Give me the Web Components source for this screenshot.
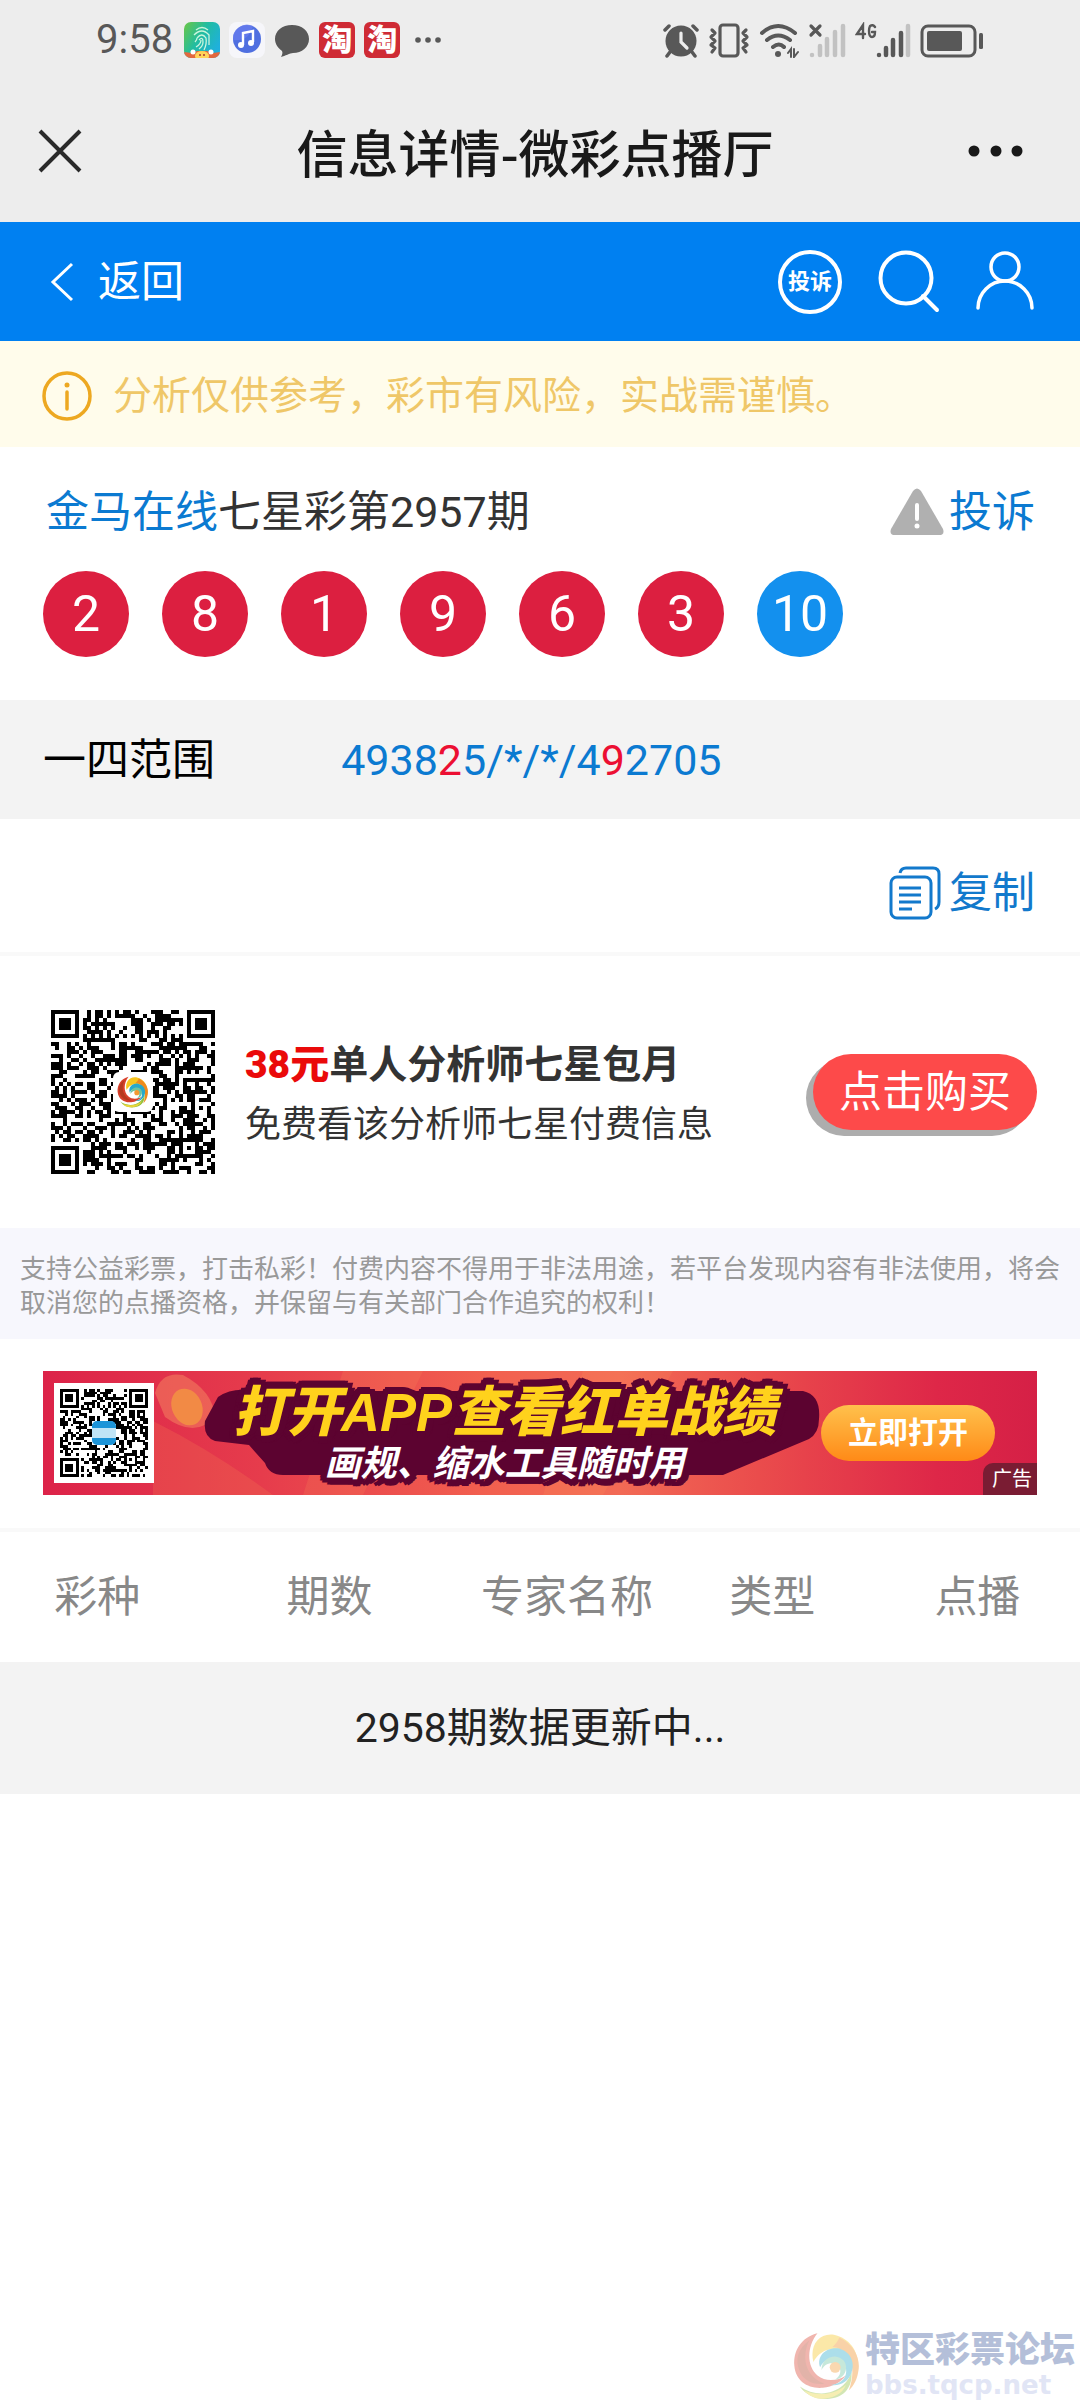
<!DOCTYPE html>
<html lang="zh-CN">
<head>
<meta charset="utf-8">
<meta name="viewport" content="width=device-width, initial-scale=1">
<title>信息详情-微彩点播厅</title>
<style>
  body { margin: 0; background: #fff; color: #333; font-family: Roboto, "Noto Sans CJK SC", sans-serif; font-size: 43px; line-height: 56px; }
</style>
</head>
<body>
<detail-page></detail-page>

<script>
const define = (name, html, setup) => {
  const tpl = document.createElement('template');
  tpl.innerHTML = `<style>
    * { box-sizing: border-box; }
    a { color: inherit; text-decoration: none; }
    button { border: 0; padding: 0; margin: 0; background: none; color: inherit; font: inherit; cursor: pointer; }
    svg { display: block; flex: none; }
  </style>` + html;
  customElements.define(name, class extends HTMLElement {
    constructor() {
      super();
      this.attachShadow({ mode: 'open' }).append(tpl.content.cloneNode(true));
    }
    connectedCallback() { if (setup) setup(this); }
  });
};

/* Rainbow swirl emblem */
define('swirl-logo', `
<style>:host { display: block; width: 68px; height: 68px; } svg { width: 100%; height: 100%; }</style>
<svg viewBox="0 0 100 100" aria-hidden="true">
  <path fill="#d8402c" d="M36 2C12 8 0 28 2 50c2 22 20 34 42 32 14-1 26-8 34-18-12 8-30 10-42 0C20 50 20 22 36 2z"/>
  <path fill="#b53a20" d="M24 12C8 24 2 40 10 58c6 14 20 20 36 18C28 70 18 54 18 38c0-10 2-18 6-26z"/>
  <path fill="#f7c51e" d="M30 44C24 20 38 1 60 4c28 6 40 32 34 56-4-20-16-36-34-35-14 0-24 8-30 19z"/>
  <path fill="#f08a1d" d="M68 8c22 10 32 32 28 50-2 12-6 20-14 28 6-16 8-34 0-48-6-10-14-16-24-16 4-4 8-8 10-14z"/>
  <path fill="#8ebf3c" d="M10 80c20 14 46 14 64-2 6-6 10-12 12-20 2 22-10 38-32 40-18 2-34-4-44-18z"/>
  <path fill="#e9d53a" d="M16 86c20 8 44 8 62-8-6 14-20 20-36 20-10 0-18-4-26-12z"/>
  <path fill="#28a9c9" d="M40 52c-6-16 8-30 26-28 18 4 26 20 20 36-4 12-16 20-30 18 16-2 24-12 22-24-2-10-12-16-22-14-8 1-14 6-16 12z"/>
  <path fill="#6cc3a0" d="M42 56c0-12 8-20 20-20 10 1 17 8 16 18-1 9-8 15-16 16 6-4 9-10 7-16-2-5-6-8-12-8-7 0-12 4-15 10z"/>
  <circle cx="62" cy="52" r="8" fill="#f39a32"/>
</svg>`);

/* QR symbol: finders, alignment and timing patterns plus a seeded data field */
define('qr-code', `
<style>
  :host { display: grid; place-items: center; background: #fff; flex: none; }
  svg, .mid { grid-area: 1 / 1; }
  svg { width: 100%; height: 100%; }
  .mid { background: #fff; border-radius: 6px; }
</style>
<svg role="img" aria-label="二维码" shape-rendering="crispEdges"></svg><div class="mid"><slot></slot></div>`, el => {
  const n = +el.getAttribute('modules');
  let seed = +el.getAttribute('seed');
  const rnd = () => (seed = (seed * 16807) % 2147483647) / 2147483647;
  const ring = (x, y, cx, cy) => Math.max(Math.abs(x - cx), Math.abs(y - cy));
  let d = '';
  for (let y = 0; y < n; y++) for (let x = 0; x < n; x++) {
    let on = rnd() < 0.52;
    for (const [cx, cy] of [[3, 3], [n - 4, 3], [3, n - 4]]) {
      const r = ring(x, y, cx, cy);
      if (r <= 4) on = r !== 4 && r !== 2;
    }
    const a = ring(x, y, n - 7, n - 7);
    if (a <= 2) on = a !== 1;
    if ((y === 6 && x > 7 && x < n - 8) || (x === 6 && y > 7 && y < n - 8)) on = (x + y) % 2 === 0;
    if (on) d += `M${x} ${y}h1v1h-1z`;
  }
  const svg = el.shadowRoot.querySelector('svg');
  svg.setAttribute('viewBox', `0 0 ${n} ${n}`);
  svg.innerHTML = `<path d="${d}"/>`;
});

define('status-bar', `
<style>
  :host { display: flex; justify-content: space-between; align-items: center; height: 80px; padding: 0 96px; background: #ededed; color: #585858; }
  div { display: flex; align-items: center; }
  .l { gap: 9px; } .r { gap: 9px; }
  .time { font-size: 40px; line-height: 48px; margin-right: 2px; }
  .tao { width: 36px; height: 36px; border-radius: 6px; background: #cf2b35; color: #fff; font-size: 30px; line-height: 36px; font-weight: 900; justify-content: center; }
</style>
<div class="l">
  <span class="time">9:58</span>
  <svg width="36" height="36" viewBox="0 0 36 36"><defs><linearGradient id="g" x2="1" y2=".6"><stop stop-color="#6cc644"/><stop offset=".5" stop-color="#22bda0"/><stop offset="1" stop-color="#1fb0dd"/></linearGradient><clipPath id="c"><rect width="36" height="36" rx="7"/></clipPath></defs><g clip-path="url(#c)"><rect width="36" height="36" fill="url(#g)"/><path d="M0 30l8 1 5-2h10l6 2 7-1v6H0z" fill="#e2683f"/><g fill="none" stroke="#c9f5dc" stroke-width="1.3"><path d="M12 8q6-5 12 0M10 13q8-8 15 0v10M13 16q5-6 9 0 1 6-2 12M15 18q4-4 4 2 0 4-4 7M11 20q2-2 2-4M12 25q5-3 5-7"/></g><ellipse cx="18" cy="34" rx="7" ry="5" fill="#ffd45a"/><circle cx="9" cy="30" r="2.500" fill="#fff"/><circle cx="27" cy="30" r="2.500" fill="#fff"/><circle cx="16" cy="33" r="1" fill="#a33"/><circle cx="20" cy="33" r="1" fill="#a33"/></g></svg>
  <svg width="36" height="36" viewBox="0 0 36 36"><rect width="36" height="36" rx="8" fill="#f6f6fa"/><circle cx="18" cy="17" r="14" fill="#4f6fe0"/><path d="M4 18a14 14 0 0 1 20-14q-4 16-20 14z" fill="#6a7cf0" opacity=".7"/><path d="M14 23V11l10-2v11" fill="none" stroke="#fff" stroke-width="2.400"/><circle cx="12" cy="23" r="3" fill="#fff"/><circle cx="22" cy="21" r="3" fill="#fff"/></svg>
  <svg width="36" height="36" viewBox="0 0 36 36"><path fill="#585858" d="M18 3c10 0 17 6 17 14s-7 14-16 14c-3 0-8 3-12 4 1-2 2-4 1-6-4-3-7-7-7-12C1 9 8 3 18 3z"/></svg>
  <div class="tao">淘</div><div class="tao">淘</div>
  <svg width="36" height="36" viewBox="0 0 36 36" fill="#585858"><circle cx="9" cy="18" r="2.800"/><circle cx="19" cy="18" r="2.800"/><circle cx="29" cy="18" r="2.800"/></svg>
</div>
<div class="r">
  <svg width="36" height="36" viewBox="0 0 36 36"><g stroke="#585858" stroke-width="3.500" stroke-linecap="round"><path d="M2 8l4-4M34 8l-4-4M7 30l-3 4M29 30l3 4"/></g><circle cx="18" cy="19" r="15.500" fill="#585858"/><path d="M18 11v9l6 6" fill="none" stroke="#ededed" stroke-width="3.200" stroke-linecap="round"/></svg>
  <svg width="42" height="36" viewBox="0 0 42 36" fill="none" stroke="#585858" stroke-width="3.200" stroke-linejoin="round" stroke-linecap="round"><rect x="12" y="3" width="18" height="31" rx="3"/><path d="M4 8l3 3-4 4 4 4-4 4 4 3-3 4M38 8l-3 3 4 4-4 4 4 4-4 3 3 4"/></svg>
  <svg width="40" height="36" viewBox="0 0 40 36" fill="none" stroke="#585858" stroke-width="4" stroke-linecap="round"><path d="M3 11q16-14 33 0M8 18q11-9 23 0M14 25q6-5 11 0"/><circle cx="19" cy="32" r="3" fill="#585858" stroke="none"/><path d="M29 31l3-4v8M35 27v8l4-5" stroke-width="2"/></svg>
  <svg width="38" height="36" viewBox="0 0 38 36" stroke-linecap="round"><path d="M3 4l9 9M12 4l-9 9" stroke="#585858" stroke-width="3.200"/><path d="M4 33v0M12 24v9M19 17v16M27 10v23M35 4v29" stroke="#c2c2c2" stroke-width="4.500"/></svg>
  <svg width="56" height="36" viewBox="0 0 56 36" stroke-linecap="round"><path d="M8 16V3L2 12h8M20 5q-2-3-5-1-1 2-1 5 0 6 3 6 3 0 3-5h-3" fill="none" stroke="#585858" stroke-width="2.400"/><path d="M24 33v0M31 26v7M38 18v15M46 11v22" stroke="#585858" stroke-width="4.500"/><path d="M53 4v29" stroke="#c2c2c2" stroke-width="4.500"/></svg>
  <svg width="64" height="36" viewBox="0 0 64 36"><rect x="2" y="4" width="53" height="30" rx="6" fill="none" stroke="#585858" stroke-width="3"/><rect x="7" y="9" width="35" height="20" rx="2" fill="#585858"/><rect x="59" y="11" width="4" height="16" rx="1.500" fill="#585858"/></svg>
</div>`);

define('nav-bar', `
<style>
  :host { display: grid; grid-template-columns: 1fr auto 1fr; align-items: center; height: 142px; padding: 0 46px 0 36px; background: #ededed; color: #191919; }
  h1 { margin: 0; font: 500 51px/60px "Noto Sans CJK SC", sans-serif; }
  button { justify-self: start; }
  button:last-child { justify-self: end; }
</style>
<button aria-label="关闭"><svg width="48" height="48" viewBox="0 0 48 48"><path d="M4 4l40 40M44 4L4 44" stroke="#2a2a2a" stroke-width="4"/></svg></button>
<h1><slot></slot></h1>
<button aria-label="更多"><svg width="66" height="48" viewBox="0 0 66 48" fill="#191919"><circle cx="6" cy="24" r="5.500"/><circle cx="28" cy="24" r="5.500"/><circle cx="49" cy="24" r="5.500"/></svg></button>`);

define('site-header', `
<style>
  :host { display: flex; justify-content: space-between; align-items: center; height: 119px; padding: 0 46px 0 48px; background: #0080f1; color: #fff; }
  .back { display: flex; align-items: center; gap: 22px; }
  nav { display: flex; align-items: center; gap: 36px; }
  .tag { display: grid; place-items: center; width: 64px; height: 64px; border: 4px solid #fff; border-radius: 50%; font-size: 22px; line-height: 24px; font-weight: 700; white-space: nowrap; }
</style>
<a class="back" href="#"><svg width="28" height="40" viewBox="0 0 28 40"><path d="M24 2L5 20l19 18" fill="none" stroke="#fff" stroke-width="3"/></svg>返回</a>
<nav>
  <a class="tag" href="#">投诉</a>
  <button aria-label="搜索"><svg width="62" height="64" viewBox="0 0 62 64" fill="none" stroke="#fff" stroke-width="4" stroke-linecap="round"><circle cx="28" cy="28" r="25.500"/><path d="M45 46l14 14"/></svg></button>
  <button aria-label="我的"><svg width="58" height="64" viewBox="0 0 58 64" fill="none" stroke="#fff" stroke-width="3.500" stroke-linecap="round"><circle cx="29" cy="17" r="14"/><path d="M2 58a27 27 0 0 1 54 0"/></svg></button>
</nav>`);

define('risk-notice', `
<style>
  :host { display: flex; align-items: center; gap: 20px; height: 106px; padding: 4px 42px 0; background: #fffceb; color: #efc768; font-size: 39px; line-height: 50px; }
</style>
<svg width="51" height="51" viewBox="0 0 51 51"><circle cx="25" cy="25" r="23" fill="none" stroke="#eda821" stroke-width="3.500"/><circle cx="25" cy="14" r="2.500" fill="#eda821"/><path d="M25 21v17" stroke="#eda821" stroke-width="3.500" stroke-linecap="round"/></svg>
<span><slot></slot></span>`);

define('lottery-ball', `
<style>
  :host { display: grid; place-items: center; width: 86px; height: 86px; border-radius: 50%; background: #dc1f40; color: #fff; font-size: 50px; line-height: 60px; }
  :host([special]) { background: #1390ee; }
</style><slot></slot>`);

define('draw-result', `
<style>
  :host { display: flex; flex-direction: column; gap: 31px; padding: 37px 45px 43px 43px; }
  .top { display: flex; justify-content: space-between; align-items: center; padding-left: 3px; }
  h2 { margin: 0; font-size: 43px; line-height: 56px; font-weight: 400; }
  a { color: #0b7ad1; }
  .report { display: flex; align-items: center; gap: 5px; }
  .balls { display: flex; gap: 33px; }
</style>
<div class="top">
  <h2><a href="#">金马在线</a>七星彩第2957期</h2>
  <a class="report" href="#"><svg width="54" height="48" viewBox="0 0 54 48"><path d="M23 3q4-5 8 0l22 38q2 6-4 6H5q-6 0-4-6z" fill="#b0b0b0"/><path d="M27 17v14" stroke="#fff" stroke-width="4" stroke-linecap="round"/><circle cx="27" cy="38" r="2.500" fill="#fff"/></svg>投诉</a>
</div>
<div class="balls">
  <lottery-ball>2</lottery-ball><lottery-ball>8</lottery-ball><lottery-ball>1</lottery-ball><lottery-ball>9</lottery-ball><lottery-ball>6</lottery-ball><lottery-ball>3</lottery-ball><lottery-ball special>10</lottery-ball>
</div>`);

define('range-row', `
<style>
  :host { display: flex; align-items: center; height: 119px; padding: 0 43px; background: #f3f3f3; color: #000; }
  .name { flex: 0 0 30%; }
  .value { color: #0b7ad1; }
  em { font-style: normal; color: #ec0f32; }
</style>
<span class="name">一四范围</span><span class="value">4938<em>2</em>5/*/*/4<em>9</em>2705</span>`);

define('copy-row', `
<style>
  :host { display: flex; justify-content: flex-end; align-items: center; height: 137px; padding: 14px 45px 0; border-bottom: 4px solid #f9f9f9; }
  button { display: flex; align-items: center; gap: 8px; color: #1279cc; }
</style>
<button><svg width="52" height="54" viewBox="0 0 52 54" fill="none" stroke="#1279cc" stroke-width="3"><rect x="2" y="11" width="40" height="41" rx="6"/><path d="M11 7q1-5 6-5h27q6 0 6 6v28q0 5-4 7"/><path d="M10 22h22M10 29h22M10 36h22M10 43h13"/></svg>复制</button>`);

define('promo-row', `
<style>
  :host { display: flex; align-items: center; height: 272px; padding: 0 43px 0 51px; gap: 30px; }
  qr-code { width: 164px; height: 164px; }
  swirl-logo { width: 32px; height: 32px; margin: 4px; }
  .copy { flex: 1; padding-top: 6px; }
  p { margin: 0; font-size: 36px; line-height: 60px; }
  .price { font-size: 39px; font-weight: 700; }
  .price b { color: #ea0a0a; }
  button { width: 224px; height: 76px; border-radius: 38px; background: #fd4a4a; color: #fff; box-shadow: -7px 6px 0 #adadad; }
</style>
<qr-code modules="41" seed="8127"><swirl-logo></swirl-logo></qr-code>
<div class="copy">
  <p class="price"><b>38元</b>单人分析师七星包月</p>
  <p>免费看该分析师七星付费信息</p>
</div>
<button>点击购买</button>`);

define('legal-note', `
<style>
  :host { display: block; padding: 22px 20px 21px; background: #f7f7fd; color: #999; font: 26px/34px "Noto Sans CJK SC", sans-serif; }
</style><slot></slot>`);

define('app-banner', `
<style>
  :host { display: block; padding: 32px 43px 33px; border-bottom: 4px solid #f9f9f9; }
  .ad { position: relative; display: flex; align-items: center; height: 124px; padding: 0 42px 0 11px; gap: 14px; overflow: hidden; color: #fff;
    background: linear-gradient(90deg, #dc2349 0%, #e63c4c 22%, #f2604f 45%, #f26a55 58%, #ea4c4c 72%, #de2748 90%, #d52046 100%); }
  .art { position: absolute; inset: 0; width: 100%; height: 100%; }
  .qr { position: relative; padding: 6px; margin-right: 34px; background: #fff; }
  qr-code { width: 88px; height: 88px; }
  .badge { display: block; width: 24px; height: 24px; border-radius: 5px; background: linear-gradient(#1c94d8 28%, #bfe4f6 28% 72%, #1c94d8 72%); }
  .words { position: relative; flex: 1; text-align: center; font-family: "Liberation Sans", "Noto Sans CJK SC", sans-serif; font-style: italic; font-weight: 700; white-space: nowrap;
    text-shadow: 7px 0 #5c0330, -7px 0 #5c0330, 0 7px #5c0330, 0 -7px #5c0330, 5px 5px #5c0330, -5px 5px #5c0330, 5px -5px #5c0330, -5px -5px #5c0330, 7px 3px #5c0330, -7px 3px #5c0330, 3px 7px #5c0330, -3px -7px #5c0330; }
  .words strong { display: block; font-size: 54px; line-height: 62px; color: #ffd21c; }
  .words span { display: block; font-size: 36px; line-height: 42px; }
  button { position: relative; width: 174px; height: 56px; border-radius: 28px; background: linear-gradient(#ffc14c, #ff8a17); font-size: 30px; line-height: 40px; font-weight: 700; }
  small { position: absolute; right: 0; bottom: 0; padding: 2px 5px 2px 9px; border-top-left-radius: 10px; background: #7a1c33; font-size: 20px; line-height: 28px; }
</style>
<div class="ad">
  <svg class="art" viewBox="0 0 994 124" preserveAspectRatio="none" aria-hidden="true">
    <path d="M540 0h90L560 124H500zM300 0h80l-60 124h-60z" fill="#ff9a5c" opacity=".16"/>
    <path d="M110 50q60 30 120 74H110z" fill="#f2704f" opacity=".3"/>
    <path d="M112 22Q118 0 140 4q30 16 32 42-20 22-50 0z" fill="#f58a62" opacity=".5"/>
    <ellipse cx="144" cy="36" rx="15" ry="19" transform="rotate(-25 144 36)" fill="#f28a45"/>
    <path d="M162 50L175 26Q190 16 210 20H760Q778 24 776 48 776 62 766 68L680 104H240Q226 104 222 92L206 74 172 70Q160 66 162 50z" fill="#5c0330"/>
  </svg>
  <div class="qr"><qr-code modules="33" seed="4419"><i class="badge"></i></qr-code></div>
  <div class="words"><strong>打开APP查看红单战绩</strong><span>画规、缩水工具随时用</span></div>
  <button>立即打开</button>
  <small>广告</small>
</div>`);

define('expert-table', `
<style>
  :host { display: block; }
  table { width: 100%; table-layout: fixed; border-collapse: collapse; text-align: center; }
  th { height: 130px; padding: 0; color: #888; font-weight: 400; white-space: nowrap; }
  td { height: 132px; padding: 0; background: #f3f3f3; color: #222; font-size: 41px; }
</style>
<table>
  <colgroup><col style="width:18%"><col style="width:25%"><col style="width:19%"><col style="width:19%"><col style="width:19%"></colgroup>
  <thead><tr><th>彩种</th><th>期数</th><th>专家名称</th><th>类型</th><th>点播</th></tr></thead>
  <tbody><tr><td colspan="5">2958期数据更新中...</td></tr></tbody>
</table>`);

define('forum-mark', `
<style>
  :host { display: flex; align-items: flex-end; gap: 4px; padding-right: 5px; }
  swirl-logo { opacity: .38; }
  div { display: flex; flex-direction: column; }
  strong { font: 900 35px/40px "Liberation Sans", "Noto Sans CJK SC", sans-serif; color: #b4bfd9; }
  span { font: 700 26px/30px "DejaVu Sans", sans-serif; color: #e1e5f5; }
</style>
<swirl-logo></swirl-logo><div><strong>特区彩票论坛</strong><span>bbs.tqcp.net</span></div>`);

define('detail-page', `
<style>
  :host { display: flex; flex-direction: column; min-height: 100vh; }
  forum-mark { margin-top: auto; align-self: flex-end; }
</style>
<status-bar></status-bar>
<nav-bar>信息详情-微彩点播厅</nav-bar>
<site-header></site-header>
<risk-notice>分析仅供参考，彩市有风险，实战需谨慎。</risk-notice>
<draw-result></draw-result>
<range-row></range-row>
<copy-row></copy-row>
<promo-row></promo-row>
<legal-note>支持公益彩票，打击私彩！付费内容不得用于非法用途，若平台发现内容有非法使用，将会取消您的点播资格，并保留与有关部门合作追究的权利！</legal-note>
<app-banner></app-banner>
<expert-table></expert-table>
<forum-mark></forum-mark>`);
</script>
</body>
</html>
